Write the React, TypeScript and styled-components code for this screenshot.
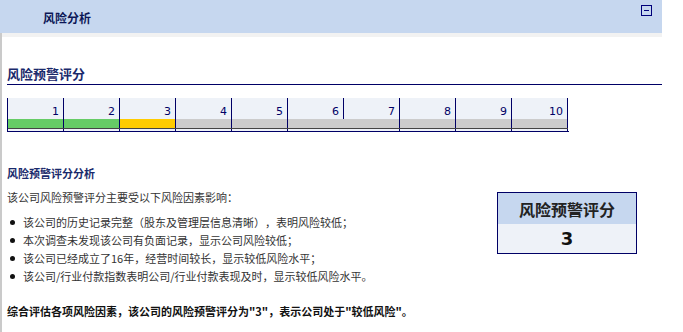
import React from 'react';
import styled, { createGlobalStyle } from 'styled-components';

const GlobalStyle = createGlobalStyle`
    html, body {
        margin: 0;
        padding: 0;
        background: #fff;
    }
    body {
        font-family: "Noto Sans CJK SC", "DejaVu Sans", sans-serif;
        color: #333;
        text-spacing-trim: space-all;
    }
`

const Page = styled.div`
    width: 662px;
`
const Header = styled.div`
    height: 33px;
    background-color: #c6d7ef;
    display: flex;
    justify-content: space-between;
    align-items: flex-start;
    padding: 0 10px 0 43px;
    box-sizing: border-box;
`
const HeaderTitle = styled.div`
    font-size: 12px;
    font-weight: bold;
    color: #0c1757;
    line-height: 16px;
    margin-top: 10px;
`
const Toggle = styled.button`
    width: 11px;
    height: 11px;
    margin-top: 5px;
    padding: 0;
    border: 1.5px solid #00007a;
    background: transparent;
    display: flex;
    align-items: center;
    justify-content: center;
    box-sizing: border-box;
    &::before {
        content: '';
        width: 5px;
        height: 1.5px;
        background: #00007a;
    }
`
const Body = styled.div`
    border-left: 2px solid #cacaca;
    min-height: calc(100vh - 33px);
`
const Strip = styled.div`
    height: 4px;
    background-color: #f2f2f2;
`
const Content = styled.div`
    padding-left: 5px;
`
const SectionTitle = styled.div`
    margin-top: 29px;
    padding-bottom: 2px;
    border-bottom: 1px solid #000066;
    font-size: 13px;
    font-weight: bold;
    line-height: 16px;
    color: #1a2a6c;
`
const Bar = styled.div`
    display: flex;
    margin-top: 13px;
    width: 561px;
    border-left: 1px solid #000066;
    border-bottom: 1px solid #000066;
`
const Cell = styled.div`
    width: 56px;
    display: flex;
    flex-direction: column;
`
const CellNumber = styled.div`
    height: 21px;
    padding: 6px 5px 0 0;
    box-sizing: border-box;
    background-color: #eef2f8;
    box-shadow: inset -1px 0 #000066;
    text-align: right;
    font-family: "DejaVu Sans", Verdana, sans-serif;
    font-size: 11px;
    line-height: 15px;
    color: #000066;
`
const CellFill = styled.div<{ $color: string; $open?: boolean }>`
    height: 9px;
    background-color: ${p => p.$color};
    box-shadow: ${p => (p.$open ? 'none' : 'inset -1px 0 #000066')};
`
const CellBase = styled.div<{ $open?: boolean }>`
    height: 3px;
    border-top: 1px solid #444;
    box-sizing: border-box;
    background-color: #eef2f8;
    box-shadow: ${p => (p.$open ? 'none' : 'inset -1px 0 #000066')};
`
const AnalysisTitle = styled.div`
    margin-top: 33px;
    font-size: 11px;
    font-weight: bold;
    line-height: 16px;
    color: #1a2a6c;
`
const AnalysisRow = styled.div`
    display: flex;
    justify-content: space-between;
    align-items: flex-start;
    padding-right: 25px;
    margin-top: 7px;
`
const TextColumn = styled.div`
    font-size: 11px;
    line-height: 18px;
    color: #333;
`
const List = styled.ul`
    list-style: none;
    margin: 7px 0 0 0;
    padding: 0;
`
const Item = styled.li`
    position: relative;
    padding-left: 16px;
    &::before {
        content: '';
        position: absolute;
        left: 3px;
        top: 7px;
        width: 5px;
        height: 5px;
        border-radius: 50%;
        background: #111;
    }
`
const ScoreBox = styled.div`
    margin-top: 4px;
    width: 140px;
    border: 1px solid #000066;
    box-sizing: border-box;
`
const ScoreHead = styled.div`
    height: 31px;
    background-color: #c6d7ef;
    display: flex;
    align-items: center;
    justify-content: center;
    font-size: 16px;
    font-weight: bold;
    color: #222;
`
const ScoreValue = styled.div`
    height: 29px;
    background-color: #eef2f8;
    display: flex;
    align-items: center;
    justify-content: center;
    font-family: "DejaVu Sans", Verdana, sans-serif;
    font-size: 18px;
    font-weight: bold;
    color: #111;
`
const Summary = styled.div`
    margin-top: 18px;
    font-size: 11px;
    font-weight: bold;
    line-height: 16px;
    color: #111;
`

const score = 3;
const levels = [1, 2, 3, 4, 5, 6, 7, 8, 9, 10];

const fillColor = (n: number) => {
    if (n > score) return '#cccccc';
    if (n === score) return '#ffcc00';
    return '#66cc66';
}

const reasons = [
    '该公司的历史记录完整（股东及管理层信息清晰），表明风险较低；',
    '本次调查未发现该公司有负面记录，显示公司风险较低；',
    '该公司已经成立了16年，经营时间较长，显示较低风险水平；',
    '该公司/行业付款指数表明公司/行业付款表现及时，显示较低风险水平。',
];

const App: React.FC = () => {
    return (
        <>
            <GlobalStyle />
            <Page>
                <Header>
                    <HeaderTitle>风险分析</HeaderTitle>
                    <Toggle aria-label="收起" />
                </Header>
                <Body>
                    <Strip />
                    <Content>
                        <SectionTitle>风险预警评分</SectionTitle>
                        <Bar>
                            {levels.map(n => (
                                <Cell key={n}>
                                    <CellNumber>{n}</CellNumber>
                                    <CellFill $color={fillColor(n)} $open={n === 6} />
                                    <CellBase $open={n === 6} />
                                </Cell>
                            ))}
                        </Bar>
                        <AnalysisTitle>风险预警评分分析</AnalysisTitle>
                        <AnalysisRow>
                            <TextColumn>
                                <div>该公司风险预警评分主要受以下风险因素影响：</div>
                                <List>
                                    {reasons.map(r => (
                                        <Item key={r}>{r}</Item>
                                    ))}
                                </List>
                            </TextColumn>
                            <ScoreBox>
                                <ScoreHead>风险预警评分</ScoreHead>
                                <ScoreValue>{score}</ScoreValue>
                            </ScoreBox>
                        </AnalysisRow>
                        <Summary>
                            综合评估各项风险因素，该公司的风险预警评分为"{score}"，表示公司处于"较低风险"。
                        </Summary>
                    </Content>
                </Body>
            </Page>
        </>
    )
}

export default App;
